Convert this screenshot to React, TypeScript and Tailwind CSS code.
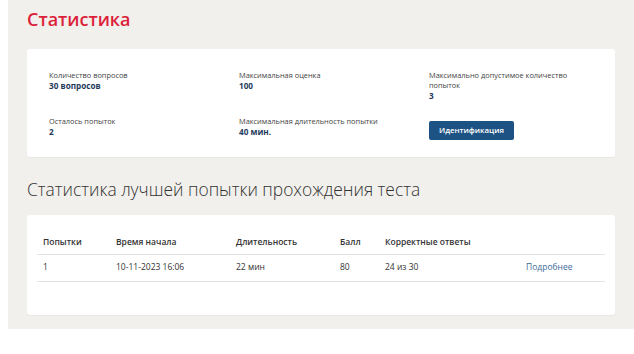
import React from "react";

const stats = [
  { label: "Количество вопросов", value: "30 вопросов" },
  { label: "Максимальная оценка", value: "100" },
  { label: "Максимально допустимое количество попыток", value: "3" },
];

const rows = [
  { attempt: "1", start: "10-11-2023 16:06", duration: "22 мин", score: "80", correct: "24 из 30" },
];

export default function App() {
  return (
    <div className="pl-[8px] bg-white" style={{ fontFamily: '"Open Sans", "Noto Sans", sans-serif' }}>
      <main className="bg-[#f2f0ec] px-[19px] pt-[5px] pb-[14px]">
        {/* Header */}
        <h1 className="text-[18px] leading-[28px] font-semibold text-[#dc1f3b]">Статистика</h1>

        {/* Summary card */}
        <section className="mt-[16px] w-[588px] h-[108px] bg-white rounded-[3px] pl-[22px] pt-[21px] shadow-[0_1px_1px_rgba(0,0,0,0.04)]">
          <div className="grid grid-cols-[190px_190px_150px]">
            {stats.map((s) => (
              <div key={s.label}>
                <p className="text-[7.4px] leading-[10px] text-[#444]">{s.label}</p>
                <p className="text-[8.2px] leading-[11px] font-bold text-[#1e3a5c]">{s.value}</p>
              </div>
            ))}
          </div>
          <div className="grid grid-cols-[190px_190px_150px] mt-[14px]">
            <div className="pt-[1px]">
              <p className="text-[7.4px] leading-[10px] text-[#444]">Осталось попыток</p>
              <p className="text-[8.2px] leading-[11px] font-bold text-[#1e3a5c]">2</p>
            </div>
            <div className="pt-[1px]">
              <p className="text-[7.4px] leading-[10px] text-[#444]">Максимальная длительность попытки</p>
              <p className="text-[8.2px] leading-[11px] font-bold text-[#1e3a5c]">40 мин.</p>
            </div>
            <div>
              <button className="w-[85px] h-[19px] rounded-[2px] bg-[#1c5384] text-white text-[7.8px] font-semibold">
                Идентификация
              </button>
            </div>
          </div>
        </section>

        {/* Best attempt */}
        <h2 className="mt-[20px] text-[17.4px] leading-[24px] font-light text-[#333]">
          Статистика лучшей попытки прохождения теста
        </h2>

        <section className="mt-[14px] w-[588px] h-[100px] bg-white rounded-[3px] px-[10px] pt-[16px] shadow-[0_1px_1px_rgba(0,0,0,0.04)]">
          <table className="w-full text-[8.5px] text-[#333] border-collapse">
            <thead>
              <tr className="h-[23px] border-b border-[#e3e3e3]">
                <th className="w-[73px] pl-[6px] text-left font-semibold">Попытки</th>
                <th className="w-[120px] pl-[6px] text-left font-semibold">Время начала</th>
                <th className="w-[104px] pl-[6px] text-left font-semibold">Длительность</th>
                <th className="w-[45px] pl-[6px] text-left font-semibold">Балл</th>
                <th className="w-[141px] pl-[6px] text-left font-semibold">Корректные ответы</th>
                <th></th>
              </tr>
            </thead>
            <tbody>
              {rows.map((r) => (
                <tr key={r.attempt} className="h-[27px] border-b border-[#e3e3e3]">
                  <td className="pl-[6px]">{r.attempt}</td>
                  <td className="pl-[6px]">{r.start}</td>
                  <td className="pl-[6px]">{r.duration}</td>
                  <td className="pl-[6px]">{r.score}</td>
                  <td className="pl-[6px]">{r.correct}</td>
                  <td className="pl-[6px] text-[#3b6a9a]">Подробнее</td>
                </tr>
              ))}
            </tbody>
          </table>
        </section>
      </main>
    </div>
  );
}
